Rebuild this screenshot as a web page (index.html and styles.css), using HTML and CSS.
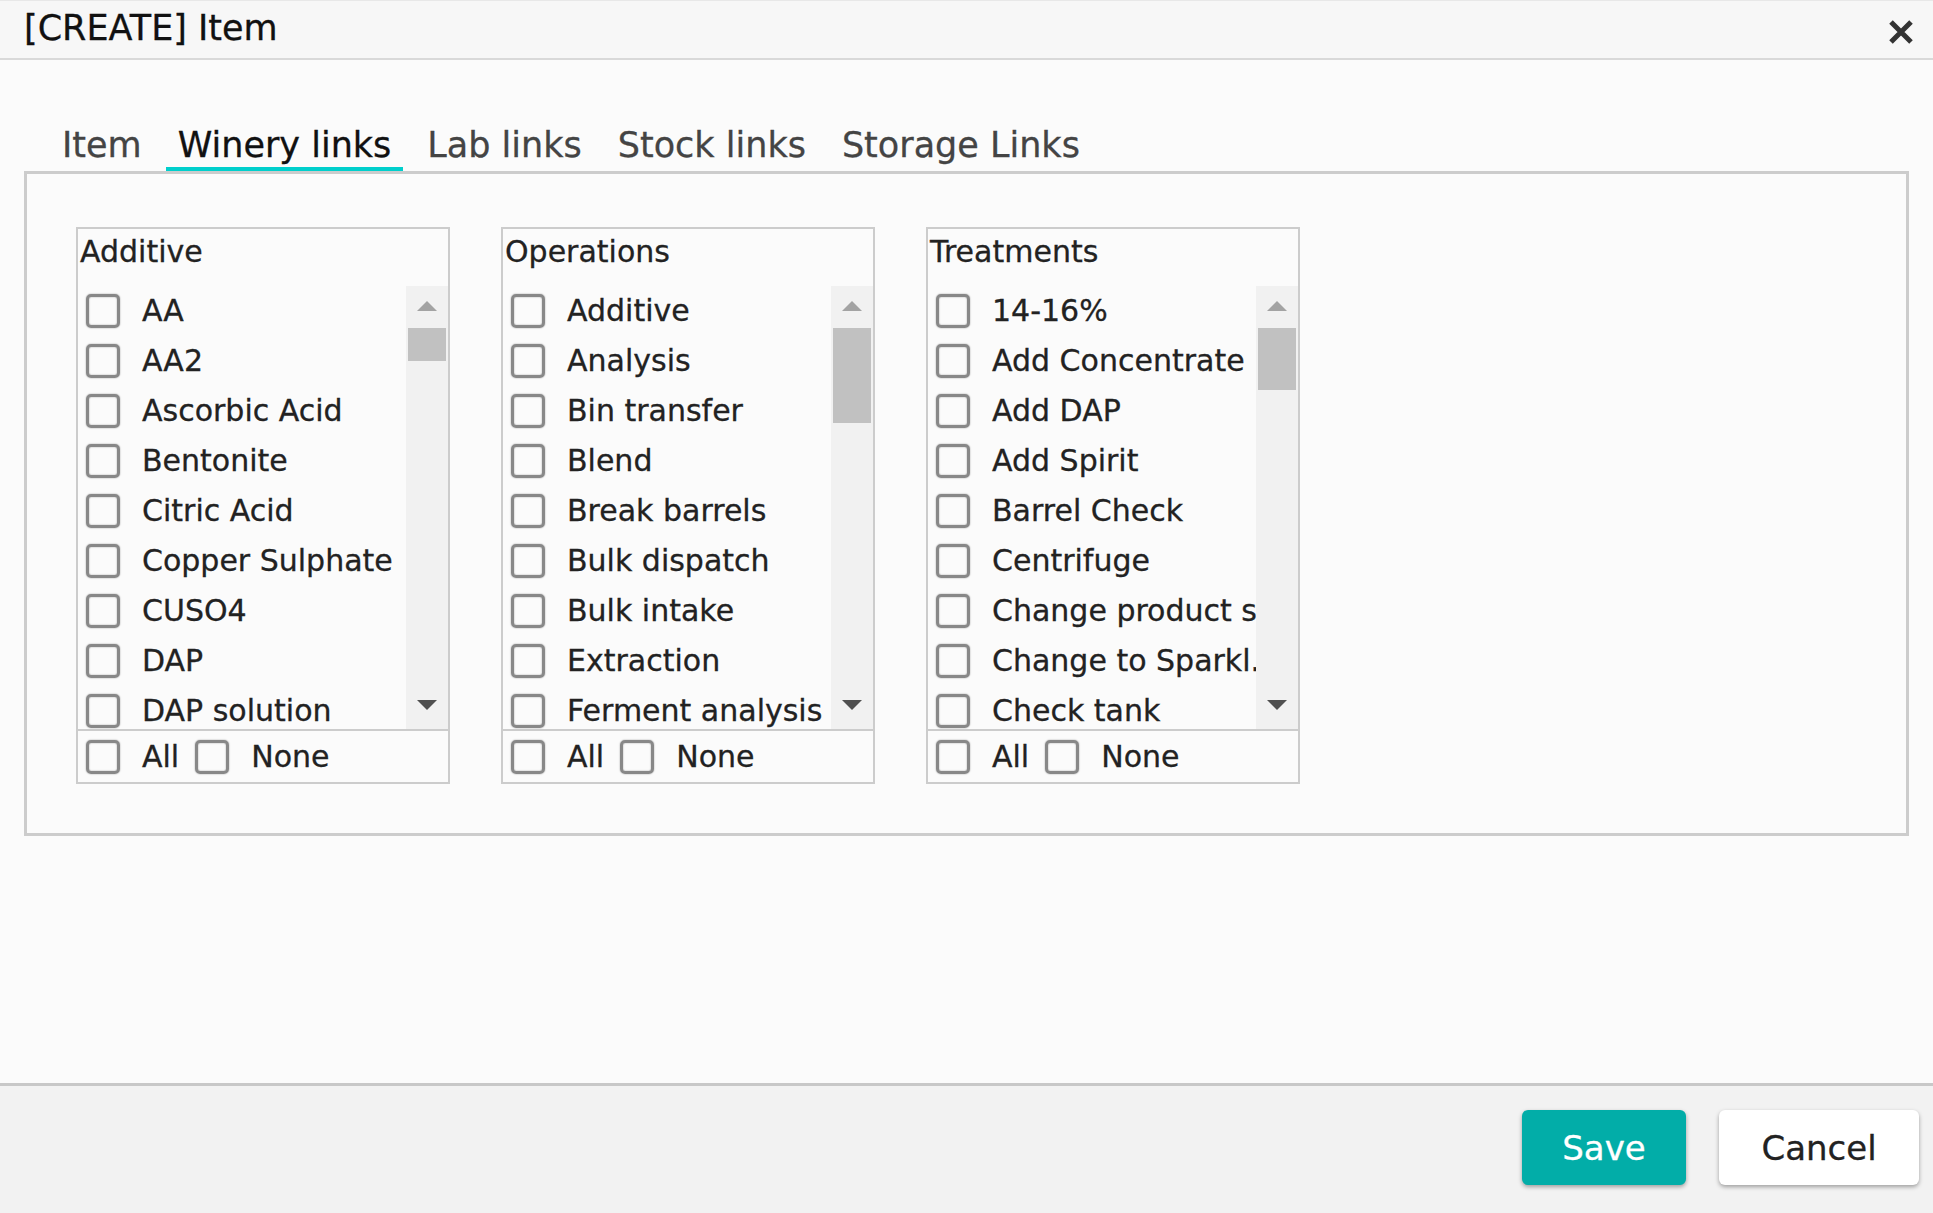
FILE: index.html
```html
<!DOCTYPE html>
<html lang="en">
<head>
    <meta charset="UTF-8">
    <title>[CREATE] Item</title>
    <link rel="stylesheet" href="styles.css">
</head>
<body>
<div class="dialog">
    <div class="dialog-header">
        <h1 class="dialog-title">[CREATE] Item</h1>
        <button class="close-btn" aria-label="Close">
            <svg width="26" height="26" viewBox="0 0 26 26"><path d="M3 3 L23 23 M23 3 L3 23" stroke="#333" stroke-width="5" stroke-linecap="butt"/></svg>
        </button>
    </div>

    <div class="dialog-body">
        <div class="tabs">
            <div class="tab">Item</div>
            <div class="tab active">Winery links</div>
            <div class="tab">Lab links</div>
            <div class="tab">Stock links</div>
            <div class="tab">Storage Links</div>
        </div>
        <div class="tab-panel">
            <div class="listbox">
                <div class="listbox-label">Additive</div>
                <div class="listbox-scroll">
                    <div class="listbox-items">
                        <label class="row"><span class="cb"></span><span class="txt">AA</span></label>
                        <label class="row"><span class="cb"></span><span class="txt">AA2</span></label>
                        <label class="row"><span class="cb"></span><span class="txt">Ascorbic Acid</span></label>
                        <label class="row"><span class="cb"></span><span class="txt">Bentonite</span></label>
                        <label class="row"><span class="cb"></span><span class="txt">Citric Acid</span></label>
                        <label class="row"><span class="cb"></span><span class="txt">Copper Sulphate</span></label>
                        <label class="row"><span class="cb"></span><span class="txt">CUSO4</span></label>
                        <label class="row"><span class="cb"></span><span class="txt">DAP</span></label>
                        <label class="row"><span class="cb"></span><span class="txt">DAP solution</span></label>
                    </div>
                    <div class="scrollbar">
                        <div class="sb-up"></div>
                        <div class="sb-track"><div class="sb-thumb thumb-1"></div></div>
                        <div class="sb-down"></div>
                    </div>
                </div>
                <div class="listbox-footer">
                    <span class="cb"></span><span class="txt">All</span>
                    <span class="cb cb-none"></span><span class="txt txt-none">None</span>
                </div>
            </div>

            <div class="listbox">
                <div class="listbox-label">Operations</div>
                <div class="listbox-scroll">
                    <div class="listbox-items">
                        <label class="row"><span class="cb"></span><span class="txt">Additive</span></label>
                        <label class="row"><span class="cb"></span><span class="txt">Analysis</span></label>
                        <label class="row"><span class="cb"></span><span class="txt">Bin transfer</span></label>
                        <label class="row"><span class="cb"></span><span class="txt">Blend</span></label>
                        <label class="row"><span class="cb"></span><span class="txt">Break barrels</span></label>
                        <label class="row"><span class="cb"></span><span class="txt">Bulk dispatch</span></label>
                        <label class="row"><span class="cb"></span><span class="txt">Bulk intake</span></label>
                        <label class="row"><span class="cb"></span><span class="txt">Extraction</span></label>
                        <label class="row"><span class="cb"></span><span class="txt">Ferment analysis</span></label>
                    </div>
                    <div class="scrollbar">
                        <div class="sb-up"></div>
                        <div class="sb-track"><div class="sb-thumb thumb-2"></div></div>
                        <div class="sb-down"></div>
                    </div>
                </div>
                <div class="listbox-footer">
                    <span class="cb"></span><span class="txt">All</span>
                    <span class="cb cb-none"></span><span class="txt txt-none">None</span>
                </div>
            </div>

            <div class="listbox">
                <div class="listbox-label">Treatments</div>
                <div class="listbox-scroll">
                    <div class="listbox-items">
                        <label class="row"><span class="cb"></span><span class="txt">14-16%</span></label>
                        <label class="row"><span class="cb"></span><span class="txt">Add Concentrate</span></label>
                        <label class="row"><span class="cb"></span><span class="txt">Add DAP</span></label>
                        <label class="row"><span class="cb"></span><span class="txt">Add Spirit</span></label>
                        <label class="row"><span class="cb"></span><span class="txt">Barrel Check</span></label>
                        <label class="row"><span class="cb"></span><span class="txt">Centrifuge</span></label>
                        <label class="row"><span class="cb"></span><span class="txt">Change product state</span></label>
                        <label class="row"><span class="cb"></span><span class="txt">Change to Sparkl.</span></label>
                        <label class="row"><span class="cb"></span><span class="txt">Check tank</span></label>
                    </div>
                    <div class="scrollbar">
                        <div class="sb-up"></div>
                        <div class="sb-track"><div class="sb-thumb thumb-3"></div></div>
                        <div class="sb-down"></div>
                    </div>
                </div>
                <div class="listbox-footer">
                    <span class="cb"></span><span class="txt">All</span>
                    <span class="cb cb-none"></span><span class="txt txt-none">None</span>
                </div>
            </div>
        </div>
    </div>

    <div class="dialog-footer">
        <button class="btn btn-save">Save</button>
        <button class="btn btn-cancel">Cancel</button>
    </div>
</div>
</body>
</html>
```

FILE: styles.css
```css
html, body {
    margin: 0;
    padding: 0;
    height: 100%;
}
body {
    font-family: "DejaVu Sans", "Liberation Sans", sans-serif;
    background-color: #fbfbfb;
    color: #222;
    -webkit-text-stroke: 0.3px;
}
.dialog {
    display: flex;
    flex-direction: column;
    height: 100%;
}

/* header */
.dialog-header {
    display: flex;
    align-items: center;
    justify-content: space-between;
    background-color: #f7f7f7;
    border-top: 1px solid #e8e8e8;
    border-bottom: 2px solid #d9d9d9;
    padding: 7px 19px 10px 24px;
}
.dialog-title {
    margin: 0;
    font-size: 35px;
    font-weight: normal;
    line-height: 40px;
    color: #111;
}
.close-btn {
    background: none;
    border: none;
    padding: 0;
    margin-top: 7px;
    width: 26px;
    height: 26px;
    cursor: pointer;
}

/* tabs */
.dialog-body {
    flex-grow: 1;
    padding: 65px 24px 0 24px;
}
.tabs {
    display: flex;
    gap: 12px;
    padding-left: 26px;
}
.tab {
    font-size: 35px;
    line-height: 40px;
    padding: 0 12px 2px 12px;
    color: #444;
    border-bottom: 4px solid transparent;
}
.tab.active {
    color: #111;
    border-bottom-color: #00cfcc;
}
.tab-panel {
    border: 3px solid #cccccc;
    display: flex;
    gap: 51px;
    padding: 53px 49px 49px 49px;
}

/* list boxes */
.listbox {
    width: 370px;
    border: 2px solid #cccccc;
    font-size: 30px;
}
.listbox-label {
    line-height: 40px;
    padding: 3px 0 14px 2px;
}
.listbox-scroll {
    display: flex;
    height: 443px;
    border-bottom: 2px solid #cccccc;
}
.listbox-items {
    flex-grow: 1;
    overflow: hidden;
}
.row {
    display: flex;
    align-items: center;
    height: 50px;
    line-height: 50px;
    white-space: nowrap;
}
.cb {
    flex-shrink: 0;
    box-sizing: border-box;
    width: 34px;
    height: 34px;
    border: 3px solid #888;
    border-radius: 5px;
    margin-left: 8px;
    box-shadow: 0 0 1.5px #888, inset 0 0 1.5px #888;
}
.txt {
    margin-left: 22px;
}
.scrollbar {
    width: 42px;
    flex-shrink: 0;
    background-color: #f1f1f1;
    display: flex;
    flex-direction: column;
}
.sb-up, .sb-down {
    height: 42px;
    display: flex;
    align-items: center;
    justify-content: center;
}
.sb-up::before {
    content: "";
    border-left: 10px solid transparent;
    border-right: 10px solid transparent;
    border-bottom: 10px solid #a3a3a3;
    margin-top: -2px;
}
.sb-down::before {
    content: "";
    border-left: 10px solid transparent;
    border-right: 10px solid transparent;
    border-top: 10px solid #505050;
    margin-bottom: 6px;
}
.sb-track {
    flex-grow: 1;
    padding: 0 2px;
}
.sb-thumb {
    background-color: #c1c1c1;
}
.thumb-1 { height: 33px; }
.thumb-2 { height: 95px; }
.thumb-3 { height: 62px; }

.listbox-footer {
    display: flex;
    align-items: center;
    height: 51px;
    line-height: 51px;
}
.cb-none {
    margin-left: 16px;
}
.txt-none {
    margin-left: 22px;
}

/* footer */
.dialog-footer {
    display: flex;
    justify-content: flex-end;
    gap: 33px;
    background-color: #f2f2f2;
    border-top: 3px solid #c8c8c8;
    height: 130px;
    box-sizing: border-box;
    padding: 24px 14px 0 0;
}
.btn {
    font-family: "DejaVu Sans", "Liberation Sans", sans-serif;
    font-size: 34px;
    -webkit-text-stroke: 0.3px;
    height: 75px;
    border: none;
    border-radius: 6px;
    box-shadow: 0 2px 4px rgba(0, 0, 0, 0.35);
    cursor: pointer;
}
.btn-save {
    width: 164px;
    background-color: #02ada8;
    color: #fff;
}
.btn-cancel {
    width: 200px;
    background-color: #fff;
    color: #222;
}
```
